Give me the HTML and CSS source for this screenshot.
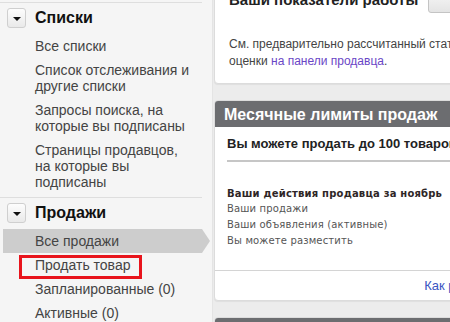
FILE: index.html
```html
<!DOCTYPE html>
<html lang="ru">
<head>
  <meta charset="UTF-8">
  <title>Мой eBay — Продажи</title>
  <link rel="stylesheet" href="styles.css">
</head>
<body>
  <div class="page">
    <aside class="sidebar">
      <div class="section">
        <div class="head">
          <span class="toggle"></span>
          <h3>Списки</h3>
        </div>
        <ul class="links">
          <li>Все списки</li>
          <li>Список отслеживания и другие списки</li>
          <li>Запросы поиска, на которые вы подписаны</li>
          <li>Страницы продавцов, на которые вы подписаны</li>
        </ul>
      </div>
      <div class="section">
        <div class="head">
          <span class="toggle"></span>
          <h3>Продажи</h3>
        </div>
        <ul class="links">
          <li class="active">Все продажи</li>
          <li><span class="marked">Продать товар</span></li>
          <li>Запланированные (0)</li>
          <li>Активные (0)</li>
        </ul>
      </div>
    </aside>

    <main class="content">
      <div class="card">
        <div class="card-top">
          <h2>Ваши показатели работы</h2>
          <button class="small-btn"><span class="dot"></span></button>
        </div>
        <p class="note">См. предварительно рассчитанный статус продавца и подробные<br>оценки <a href="#">на панели продавца</a>.</p>
      </div>

      <div class="card">
        <div class="card-title">Месячные лимиты продаж</div>
        <div class="card-body">
          <p class="limit">Вы можете продать до 100 товаров на сумму 5 000,00 $</p>
          <h4>Ваши действия продавца за ноябрь</h4>
          <ul class="stats">
            <li>Ваши продажи</li>
            <li>Ваши объявления (активные)</li>
            <li>Вы можете разместить</li>
          </ul>
        </div>
        <div class="card-foot"><a href="#">Как рассчитываются лимиты?</a></div>
      </div>

      <div class="card">
        <div class="card-title">Ваши последние продажи</div>
        <div class="card-body">
          <p class="limit">Нет продаж</p>
        </div>
      </div>
    </main>
  </div>
</body>
</html>
```

FILE: styles.css
```css
* { box-sizing: border-box; margin: 0; padding: 0; }
body { font-family: "Liberation Sans", Arial, sans-serif; background: #ececec; color: #333; overflow: hidden; }
ul { list-style: none; }
a { text-decoration: none; }

.page {
  display: flex;
  align-items: flex-start;
  width: 640px;
}

/* Левая колонка */
.sidebar {
  width: 213px;
  flex-shrink: 0;
  min-height: 322px;
  padding-top: 2px;
  background: #f5f5f5;
  border-right: 1px solid #e4e4e4;
}
.section {
  margin-right: 10px;
  border-top: 1px solid #dedede;
}
.head {
  display: flex;
  align-items: center;
  gap: 9px;
  padding: 5px 0 6px 7px;
}
.head h3 {
  font-size: 16px;
  line-height: 20px;
  font-weight: 700;
  color: #111;
}
.toggle {
  position: relative;
  width: 19px;
  height: 20px;
  border: 1px solid #cfcfcf;
  border-radius: 3px;
  background: linear-gradient(#fdfdfd, #e9e9e9);
}
.toggle::after {
  content: '';
  position: absolute;
  left: 5px;
  top: 8px;
  border-left: 4px solid transparent;
  border-right: 4px solid transparent;
  border-top: 4px solid #111;
}
.links { padding-bottom: 3px; }
.links li {
  position: relative;
  margin-left: 3px;
  padding: 4px 12px 4px 32px;
  font-size: 14px;
  line-height: 16px;
  color: #444;
}
.links li.active { background: #cdcdcd; }
.links li.active::after {
  content: '';
  position: absolute;
  right: -8px;
  top: 0;
  border-top: 12px solid transparent;
  border-bottom: 12px solid transparent;
  border-left: 8px solid #cdcdcd;
}
.marked {
  position: relative;
  display: inline-block;
}
.marked::after {
  content: '';
  position: absolute;
  left: -16px;
  right: -12px;
  top: -2px;
  bottom: -6px;
  border: 3px solid #e8141c;
}

/* Основная колонка */
.content {
  width: 405px;
  margin-top: -26px;
  padding-left: 1px;
}
.card {
  margin-bottom: 16px;
  background: #fff;
  border: 1px solid #dcdcdc;
  border-radius: 4px;
  box-shadow: 0 1px 1px rgba(0,0,0,0.06);
  overflow: hidden;
}
.card-top {
  display: flex;
  align-items: center;
  gap: 10px;
  padding: 12px 14px 0;
  margin-bottom: 23px;
}
.card-top h2 {
  font-size: 15px;
  line-height: 20px;
  font-weight: 700;
  color: #222;
  white-space: nowrap;
}
.small-btn {
  position: relative;
  width: 40px;
  height: 26px;
  border: 1px solid #c4c4c4;
  border-radius: 3px;
  background: linear-gradient(#fafafa, #e4e4e4);
}
.small-btn .dot {
  position: absolute;
  left: 10px;
  top: 5px;
  width: 12px;
  height: 6px;
  background: #a9c9ee;
}
.note {
  padding: 0 14px 13px;
  font-size: 12px;
  line-height: 17px;
  color: #444;
  white-space: nowrap;
}
.note a { color: #6a46c6; }

.card-title {
  padding: 4px 9px 3px;
  font-size: 16px;
  line-height: 19px;
  font-weight: 700;
  color: #fff;
  background: #6c6d70;
  white-space: nowrap;
}
.card-body { padding: 10px 12px 21px; }
.limit {
  padding-bottom: 9px;
  border-bottom: 2px solid #c6c6c6;
  font-size: 13px;
  line-height: 14px;
  font-weight: 700;
  color: #222;
  white-space: nowrap;
}
.card-body h4 {
  margin-top: 25px;
  font-family: "DejaVu Sans", Verdana, sans-serif;
  font-size: 10px;
  letter-spacing: 0.2px;
  line-height: 14px;
  font-weight: 700;
  color: #2e2626;
  white-space: nowrap;
}
.stats li {
  font-family: "DejaVu Sans", Verdana, sans-serif;
  font-size: 10px;
  letter-spacing: 0.15px;
  line-height: 16px;
  color: #555;
}
.card-foot {
  padding: 7px 12px 6px;
  border-top: 1px solid #d4d4d4;
  text-align: right;
  font-size: 13px;
  line-height: 16px;
}
.card-foot a { color: #3a55c2; }
```
